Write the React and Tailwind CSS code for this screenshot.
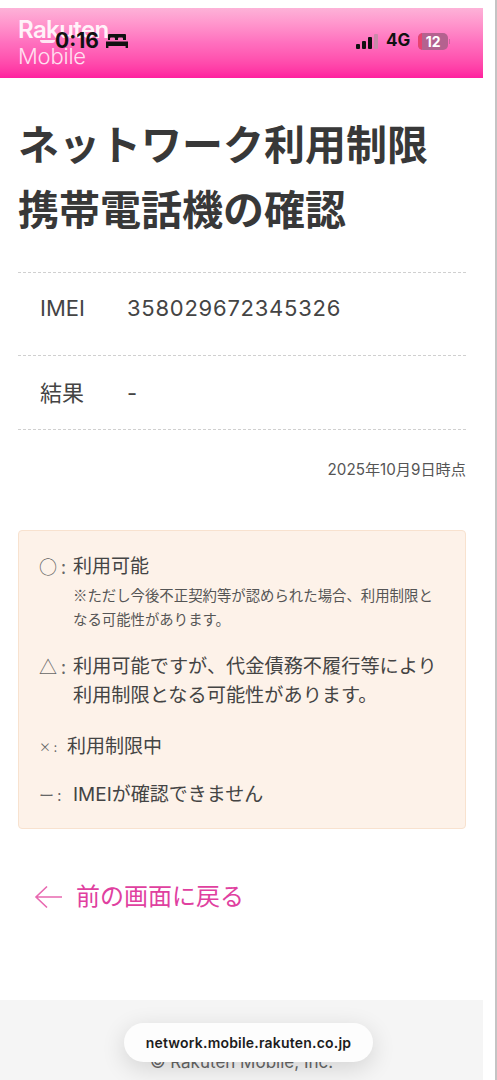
const jp = "font-['Inter','Noto_Sans_CJK_JP',sans-serif]";
const cjk = "font-['Noto_Sans_CJK_JP',sans-serif]";

function Row({ label, value, className }) {
  return (
    <div className={"flex items-center border-b border-dashed border-[#d0d0d0] pl-[22px] text-[22px] text-[#444] " + className}>
      <span className="w-[87px]">{label}</span>
      <span className="tracking-[0.75px]">{value}</span>
    </div>
  );
}

function Legend({ mark, markW, className, children }) {
  return (
    <div className={"flex text-[#444] " + className}>
      <span className={"flex shrink-0 text-[#666] " + cjk + " " + markW}>{mark}</span>
      <div className="min-w-0 flex-1">{children}</div>
    </div>
  );
}

export default function App() {
  return (
    <div className={"relative h-[1080px] w-[497px] overflow-hidden bg-white " + jp}>
      <div className="flex h-full flex-col border-r-2 border-[#c4c4c4] pr-[12px] pt-[8px]">
        <header className="relative h-[70px] bg-gradient-to-b from-[#fdb2d8] via-[#ff6fbe] to-[#ff1f9f] pl-[18px] pt-[9px] text-white">
          <div className="text-[24px] font-semibold leading-[26px] tracking-[-0.6px] text-[#fff2f9]">Rakuten</div>
          <div className="text-[22px] font-light leading-[26px] tracking-[-0.2px] text-[#ffe0f0]">Mobile</div>
          <span className="absolute left-[40px] top-[32px] h-[3px] w-[15px] rounded-b-full bg-[#ffe6f3]" />
        </header>

        <main className="flex-1 pl-[18px] pr-[17px]">
          <h1 className="mt-[35px] text-[41px] font-bold leading-[65px] text-[#383838]">
            ネットワーク利用制限
            <br />
            携帯電話機の確認
          </h1>
          <div className="mt-[29px] border-t border-dashed border-[#d0d0d0]">
            <Row label="IMEI" value="358029672345326" className="h-[83px] pb-[11px]" />
            <Row label="結果" value="-" className="h-[74px] pt-[1px]" />
          </div>
          <p className="mt-[30px] text-right text-[15.2px] leading-[20px] text-[#555]">2025年10月9日時点</p>

          <section className="mt-[50px] h-[299px] rounded-[4px] border border-[#f8e2cf] bg-[#fdf2e9] pl-[20px] pr-[18px] pt-[22px]">
            <Legend mark="○ :" markW="w-[34px] text-[18px] leading-[27px]" className="">
              <div className="text-[19px] leading-[27px]">利用可能</div>
              <p className={"mt-[3px] pr-[8px] text-[14.4px] leading-[24px] text-[#555] " + cjk}>
                ※ただし今後不正契約等が認められた場合、利用制限となる可能性があります。
              </p>
            </Legend>
            <Legend mark="△ :" markW="w-[34px] text-[18px] leading-[29px]" className="mt-[21px]">
              <div className="text-[19.2px] leading-[29px]">利用可能ですが、代金債務不履行等により利用制限となる可能性があります。</div>
            </Legend>
            <Legend mark="× :" markW="w-[28px] text-[12px] leading-[27px] gap-[6px]" className="mt-[23px]">
              <div className="text-[19px] leading-[27px]">利用制限中</div>
            </Legend>
            <Legend mark="ー :" markW="w-[34px] text-[15px] leading-[27px] gap-[2px]" className="mt-[21px]">
              <div className="text-[19px] leading-[27px]">IMEIが確認できません</div>
            </Legend>
          </section>

          <a className="ml-[16px] mt-[51px] flex items-center gap-[13px] text-[24px] leading-[34px] text-[#e0409f]">
            <svg width="29" height="24" viewBox="0 0 29 24" fill="none" stroke="#e868b0" strokeWidth="1.6">
              <path d="M28 12H2M13 1.5 2 12l11 10.5" />
            </svg>
            <span>前の画面に戻る</span>
          </a>
        </main>

        <footer className="h-[80px] bg-[#f5f5f5] pt-[50px] text-center text-[17px] leading-[24px] text-[#666]">
          © Rakuten Mobile, Inc.
        </footer>
      </div>

      <div className="absolute left-[55px] top-[29px] flex items-center gap-[7px] font-['Inter',sans-serif] text-[21px] font-bold leading-[24px] text-[#111]">
        <span>0:16</span>
        <svg width="22" height="16" viewBox="0 0 22 16" fill="#111">
          <path d="M3 1h16a1 1 0 0 1 1 1v5h-3V5.5a1 1 0 0 0-1-1h-3a1 1 0 0 0-1 1V7H9V5.5a1 1 0 0 0-1-1H5a1 1 0 0 0-1 1V7H2V2a1 1 0 0 1 1-1Z" />
          <path d="M0 8.5h22V15h-2.4v-2H2.4v2H0Z" />
        </svg>
      </div>

      <div className="absolute left-[356px] top-[29px] flex h-[24px] items-center font-['Inter',sans-serif] text-[#111]">
        <div className="flex h-[15px] items-end gap-[2px]">
          <span className="h-[5px] w-[4px] rounded-[1px] bg-[#111]" />
          <span className="h-[8px] w-[4px] rounded-[1px] bg-[#111]" />
          <span className="h-[12px] w-[4px] rounded-[1px] bg-[#111]" />
          <span className="h-[15px] w-[4px] rounded-[1px] bg-[#c88aa8]" />
        </div>
        <span className="ml-[8px] text-[17px] font-bold">4G</span>
        <div className="relative ml-[8px] flex h-[17px] w-[30px] items-center justify-center overflow-hidden rounded-[5px] bg-[#b4628f]">
          <span className="absolute bottom-0 left-0 top-0 w-[4px] bg-[#e8436f]" />
          <span className="relative text-[14px] font-bold text-white">12</span>
        </div>
        <span className="ml-[1px] h-[5px] w-[1px] bg-[#c76a9a]" />
      </div>

      <div className="absolute left-[124px] top-[1023px] flex h-[39px] w-[249px] items-center justify-center rounded-full bg-[#fdfdfd] font-['Inter',sans-serif] text-[14px] font-semibold tracking-[0.2px] text-[#1c1c1c] shadow-[0_6px_24px_rgba(0,0,0,0.14)]">
        network.mobile.rakuten.co.jp
      </div>
    </div>
  );
}
